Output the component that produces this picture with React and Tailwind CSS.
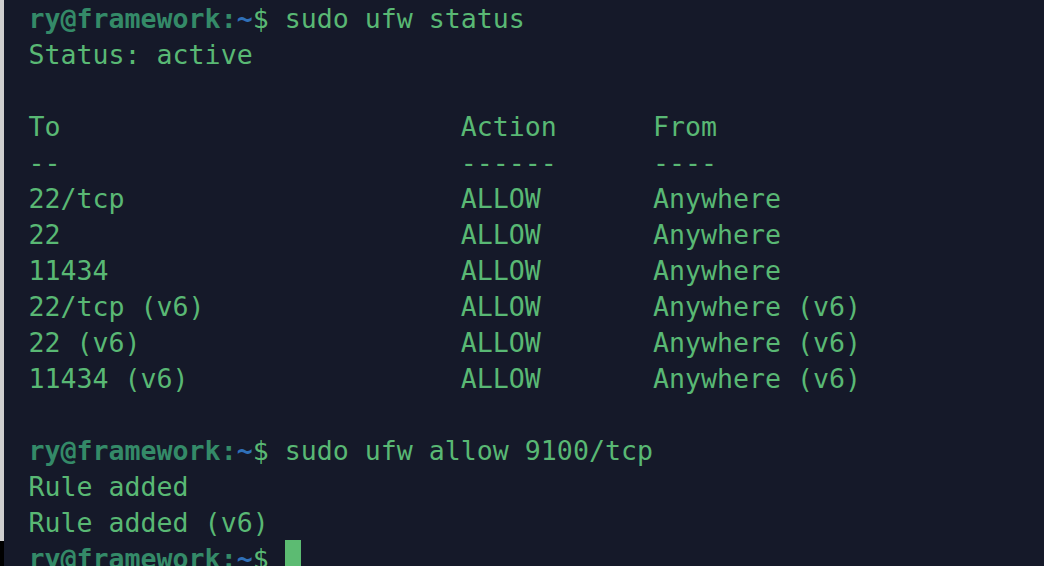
const Prompt = () => (
  <>
    <span className="font-bold text-[#348a68]">ry@framework:</span>
    <span className="font-bold text-[#2f70b8]">~</span>
    <span>$ </span>
  </>
);

const rows = [
  ['22/tcp', 'ALLOW', 'Anywhere'],
  ['22', 'ALLOW', 'Anywhere'],
  ['11434', 'ALLOW', 'Anywhere'],
  ['22/tcp (v6)', 'ALLOW', 'Anywhere (v6)'],
  ['22 (v6)', 'ALLOW', 'Anywhere (v6)'],
  ['11434 (v6)', 'ALLOW', 'Anywhere (v6)'],
];

const pad = (s, n) => s + ' '.repeat(Math.max(0, n - s.length));

export default function App() {
  const lines = [
    <><Prompt />sudo ufw status</>,
    'Status: active',
    '',
    pad('To', 27) + pad('Action', 12) + 'From',
    pad('--', 27) + pad('------', 12) + '----',
    ...rows.map(([a, b, c]) => pad(a, 27) + pad(b, 12) + c),
    '',
    <><Prompt />sudo ufw allow 9100/tcp</>,
    'Rule added',
    'Rule added (v6)',
    <><Prompt /><span className="inline-block w-4 h-9 bg-[#5cbb72] align-top -translate-y-px" /></>,
  ];

  return (
    <div className="w-[1044px] h-[566px] overflow-hidden flex bg-[#151929]">
      <div className="w-1 flex flex-col shrink-0">
        <div className="h-[541px] bg-[#cfcfcf]" />
        <div className="flex-1 bg-black" />
      </div>
      <div
        className="pl-[24.5px] pt-[1px] text-[26.6px] leading-[36px] text-[#59b874] whitespace-pre"
        style={{ fontFamily: '"DejaVu Sans Mono", monospace' }}
      >
        {lines.map((l, i) => (
          <div key={i} className="h-9">{l}</div>
        ))}
      </div>
    </div>
  );
}
